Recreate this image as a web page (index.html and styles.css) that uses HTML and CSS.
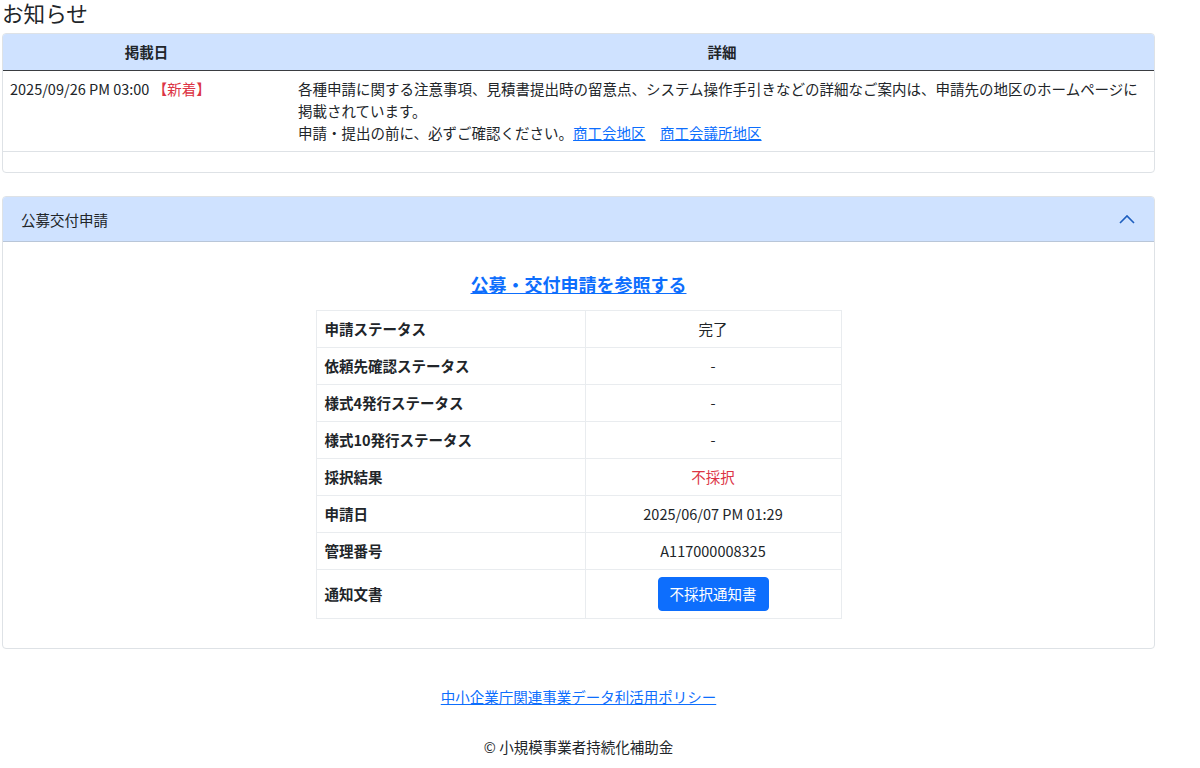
FILE: index.html
```html
<!DOCTYPE html>
<html lang="ja">
<head>
<meta charset="utf-8">
<title>お知らせ</title>
<link rel="stylesheet" href="styles.css">
</head>
<body>
<div class="page">
  <h2 class="title">お知らせ</h2>
  <div class="notice-card">
    <table class="notice-table">
      <colgroup><col class="c-date"><col></colgroup>
      <thead>
        <tr><th>掲載日</th><th>詳細</th></tr>
      </thead>
      <tbody>
        <tr>
          <td>2025/09/26 PM 03:00 <span class="new">【新着】</span></td>
          <td>各種申請に関する注意事項、見積書提出時の留意点、システム操作手引きなどの詳細なご案内は、申請先の地区のホームページに掲載されています。<br>申請・提出の前に、必ずご確認ください。<a href="#">商工会地区</a>　<a href="#">商工会議所地区</a></td>
        </tr>
        <tr class="empty"><td></td><td></td></tr>
      </tbody>
    </table>
  </div>

  <div class="acc">
    <div class="acc-head">
      <span>公募交付申請</span>
      <svg class="chev" width="16" height="10" viewBox="0 0 16 10"><path d="M1 9 L8 2 L15 9" fill="none" stroke="currentColor" stroke-width="1.6"/></svg>
    </div>
    <div class="acc-body">
      <a class="ref-link" href="#">公募・交付申請を参照する</a>
      <table class="status">
        <tbody>
          <tr><th>申請ステータス</th><td>完了</td></tr>
          <tr><th>依頼先確認ステータス</th><td>-</td></tr>
          <tr><th>様式4発行ステータス</th><td>-</td></tr>
          <tr><th>様式10発行ステータス</th><td>-</td></tr>
          <tr><th>採択結果</th><td class="red">不採択</td></tr>
          <tr><th>申請日</th><td>2025/06/07 PM 01:29</td></tr>
          <tr><th>管理番号</th><td>A117000008325</td></tr>
          <tr class="btn-row"><th>通知文書</th><td><button class="btn" type="button">不採択通知書</button></td></tr>
        </tbody>
      </table>
    </div>
  </div>

  <footer class="foot">
    <a href="#">中小企業庁関連事業データ利活用ポリシー</a>
    <p class="copy">© 小規模事業者持続化補助金</p>
  </footer>
</div>
</body>
</html>
```

FILE: styles.css
```css
html, body {
  margin: 0;
  padding: 0;
  background: #fff;
}
body {
  font-family: "Noto Sans CJK JP", "Noto Sans", sans-serif;
  font-size: 14.5px;
  line-height: 22px;
  color: #212529;
}
a {
  color: #0d6efd;
  text-decoration: underline;
}
.page {
  width: 1153px;
  margin-left: 2px;
}
.title {
  margin: 0 0 7px 0;
  font-size: 21.6px;
  font-weight: 400;
  line-height: 26px;
}
.notice-card {
  border: 1px solid #dee2e6;
  border-radius: 4px;
  overflow: hidden;
}
.notice-table {
  width: 100%;
  border-collapse: collapse;
  table-layout: fixed;
}
.c-date { width: 287px; }
.notice-table th {
  background: #cfe2ff;
  font-weight: 700;
  text-align: center;
  padding: 7px 8px;
  height: 22px;
  border-bottom: 1.5px solid #3a3d41;
}
.notice-table td {
  padding: 7px 8px 7px 7px;
  vertical-align: top;
  border-bottom: 1px solid #dee2e6;
}
.notice-table td + td {
  padding-left: 8px;
}
.notice-table tr.empty td {
  height: 6px;
  padding: 7px 8px;
  border-bottom: none;
}
.new { color: #dc3545; }

.acc {
  margin-top: 23px;
  border: 1px solid #dee2e6;
  border-radius: 4px;
  overflow: hidden;
}
.acc-head {
  background: #cfe2ff;
  height: 45px;
  display: flex;
  align-items: center;
  justify-content: space-between;
  padding: 0 19px 0 18px;
  box-shadow: inset 0 -1px 0 #b9c6d8;
  color: #212529;
}
.chev {
  color: #1f5fbf;
  margin-top: -2px;
}
.acc-body {
  display: flex;
  flex-direction: column;
  align-items: center;
  padding: 29px 18px 29px;
}
.ref-link {
  font-size: 18px;
  font-weight: 700;
  line-height: 27px;
  margin-bottom: 12px;
}
.status {
  width: 526px;
  border-collapse: collapse;
  table-layout: fixed;
}
.status th,
.status td {
  border: 1px solid #e9ecef;
  padding: 7px 8px;
  height: 22px;
  vertical-align: middle;
}
.status th {
  width: 252px;
  text-align: left;
  font-weight: 700;
}
.status td {
  text-align: center;
}
.status .red { color: #dc3545; }
.status .btn-row td { padding: 7px 8px 7px; }
.btn {
  font-family: inherit;
  font-size: 14.5px;
  line-height: 21.6px;
  color: #fff;
  background: #0d6efd;
  border: 1px solid #0d6efd;
  border-radius: 4px;
  padding: 5px 11px;
  cursor: pointer;
}
.foot {
  text-align: center;
  padding-top: 37px;
}
.foot a {
  display: inline-block;
  line-height: 22px;
}
.copy {
  margin: 28px 0 0;
  line-height: 22px;
}
```
